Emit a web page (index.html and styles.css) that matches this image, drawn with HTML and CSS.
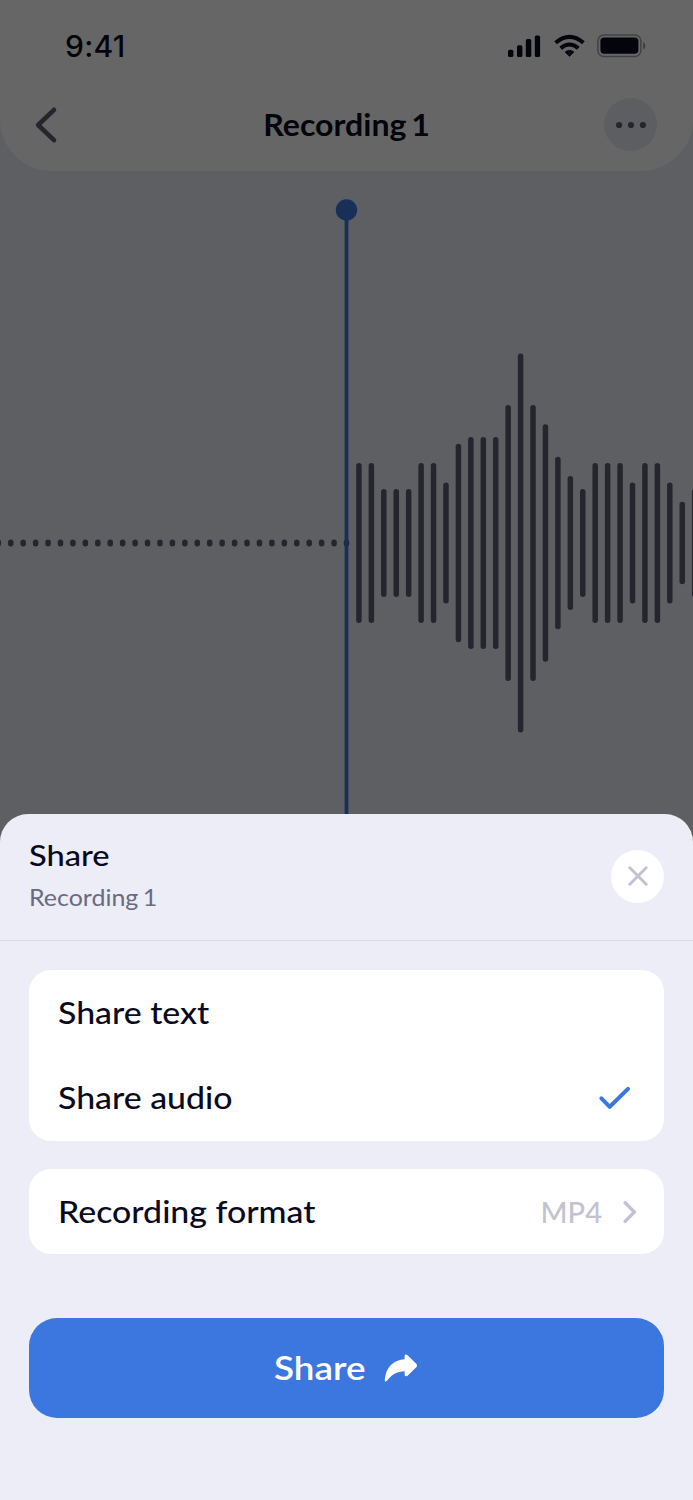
FILE: index.html
```html
<!DOCTYPE html>
<html lang="en">
<head>
<meta charset="utf-8">
<title>Recording 1</title>
<link rel="stylesheet" href="styles.css">
</head>
<body>
<div class="phone">
  <main class="player">
    <header class="topbar">
      <div class="status">
        <span class="time">9:41</span>
        <svg class="status-icons" width="140" height="26" viewBox="0 0 140 26">
          <g fill="#0a0a1e">
            <rect x="1" y="16.8" width="5.4" height="7.2" rx="1.6"/>
            <rect x="10" y="12.3" width="5.4" height="11.7" rx="1.6"/>
            <rect x="18.8" y="6.1" width="5.5" height="17.9" rx="1.6"/>
            <rect x="27.8" y="2.6" width="5.3" height="21.4" rx="1.6"/>
            <path d="M62.5 23.2 58.2 19Q62.5 15.8 66.8 19Z" stroke="#0a0a1e" stroke-width="1" stroke-linejoin="round"/>
          </g>
          <g fill="none" stroke="#0a0a1e" stroke-width="4">
            <path d="M48.6 9.8Q62.5-2 76.4 9.8"/>
            <path d="M53.7 15.2Q62.5 7.9 71.3 15.2"/>
          </g>
          <rect x="90.9" y="2" width="43" height="21.5" rx="6" fill="none" stroke="#0a0a1e" stroke-opacity=".38" stroke-width="1.5"/>
          <rect x="93.4" y="4.5" width="38" height="16.3" rx="3.7" fill="#0a0a1e"/>
          <path d="M136.2 9v7.6q2.2-1 2.2-3.8t-2.2-3.8Z" fill="#0a0a1e" fill-opacity=".42"/>
        </svg>
      </div>
      <div class="nav">
        <svg class="back" width="28" height="40" viewBox="0 0 28 40"><path d="M20 4.8 4.1 20 20 35.2" fill="none" stroke="#5c5c70" stroke-width="4.6" stroke-linecap="round" stroke-linejoin="round"/></svg>
        <h1 class="title">Recording 1</h1>
        <button class="more" aria-label="More"><svg width="32" height="8" viewBox="0 0 32 8" fill="#5c5c70"><circle cx="4.1" cy="4" r="3.1"/><circle cx="16" cy="4" r="3.1"/><circle cx="27.9" cy="4" r="3.1"/></svg></button>
      </div>
    </header>
    <svg class="waveform" id="waveform" width="693" height="643" viewBox="0 171 693 643"></svg>
  </main>
  <div class="scrim"></div>
  <section class="sheet">
    <header class="sheet-head">
      <div class="sheet-titles">
        <h2 class="sheet-title">Share</h2>
        <p class="sheet-sub">Recording 1</p>
      </div>
      <button class="close" aria-label="Close"><svg width="20" height="20" viewBox="0 0 20 20"><path d="M1.8 1.8l16.4 16.4M18.2 1.8 1.8 18.2" stroke="#c2c2d0" stroke-width="2.9" stroke-linecap="round"/></svg></button>
    </header>
    <div class="sheet-body">
      <div class="card">
        <div class="row"><span class="label">Share text</span></div>
        <div class="row"><span class="label">Share audio</span>
          <svg class="check" width="34" height="26" viewBox="0 0 34 26"><path d="M3.4 13.3 11.7 21.8 30 3.9" fill="none" stroke="#3b77df" stroke-width="4" stroke-linecap="round" stroke-linejoin="round"/></svg></div>
      </div>
      <div class="card">
        <div class="row"><span class="label">Recording format</span>
          <span class="value">MP4</span>
          <svg class="chevron" width="16" height="24" viewBox="0 0 16 24"><path d="M4.1 2.7 13.4 12 4.1 21.4" fill="none" stroke="#c2c2d0" stroke-width="3.4" stroke-linecap="round" stroke-linejoin="round"/></svg></div>
      </div>
      <button class="share"><span class="share-label">Share</span>
        <svg width="34" height="28" viewBox="0 0 34 28"><path d="M3 26.7C1.6 28.1.6 27.4.8 25.4 1.7 13.5 9.5 5.8 20.6 5.2V2.2C20.6.5 22.2 0 23.3 1L32.3 9.8C33.3 10.8 33.3 12.2 32.3 13.2L23.3 21.9C22.2 22.8 20.6 22.2 20.6 20.6V17.2C13.5 17.4 8 20 3 26.7Z" fill="#fff"/></svg>
      </button>
    </div>
  </section>
</div>
<script src="waveform.js"></script>
</body>
</html>
```
FILE: styles.css
```css
* { box-sizing: border-box; margin: 0; }
body { background: #ecedf6; font-family: Lato, sans-serif; color: #0a0a1e; }
button { border: 0; padding: 0; font: inherit; }
svg { display: block; flex: none; }
.phone { position: relative; width: 693px; height: 1500px; overflow: hidden; display: flex; flex-direction: column; }
.player { height: 844px; margin-bottom: -30px; flex: none; background: #ecedf5; display: flex; flex-direction: column; }
.topbar { height: 171px; background: #fff; border-radius: 0 0 52px 52px; display: flex; flex-direction: column; }
.status { height: 92px; padding: 0 46px 0 65px; display: flex; align-items: center; justify-content: space-between; }
.time { font: 500 30px/36px Inter, sans-serif; letter-spacing: .3px; }
.status-icons { margin-top: -1px; }
.nav { height: 65px; padding: 0 36px 0 34px; display: grid; grid-template-columns: 80px 1fr 78px; align-items: center; }
.title { font-size: 31px; font-weight: 700; line-height: 36px; text-align: center; white-space: nowrap; word-spacing: -3px; transform: scaleX(1.035); padding-bottom: 2px; }
.more { width: 53px; height: 53px; border-radius: 50%; background: #e9ecf6; display: grid; place-items: center; justify-self: end; }
.waveform .bar { stroke: #5c5c70; stroke-width: 5.5; stroke-linecap: round; }
.waveform .playhead { stroke: #3b77df; stroke-width: 3.8; }
.waveform .knob { fill: #3b77df; }
.scrim { position: absolute; inset: 0; background: rgba(0, 0, 0, .6); }
.sheet { position: relative; height: 686px; background: #ecedf6; border-radius: 28px 28px 0 0; }
.sheet-head { height: 127px; padding: 0 29px 2px; display: flex; align-items: center; justify-content: space-between; border-bottom: 1.5px solid #dcdce6; }
.sheet-titles { display: flex; flex-direction: column; gap: 6px; }
.sheet-title { font-size: 29px; font-weight: 500; line-height: 36px; transform: scaleX(1.125); transform-origin: left; }
.sheet-sub { font-size: 24px; line-height: 36px; color: #6a6a80; word-spacing: -2px; transform: scaleX(1.04); transform-origin: left; }
.close { width: 53px; height: 53px; border-radius: 50%; background: #fff; display: grid; place-items: center; }
.sheet-body { padding: 29px 29px 0; display: flex; flex-direction: column; }
.card { background: #fff; border-radius: 22px; margin-bottom: 28.5px; }
.row { height: 85.25px; padding: 0 27px 0 29px; display: flex; align-items: center; }
.label { font-size: 31px; font-weight: 500; line-height: 38px; padding-bottom: 1px; margin-right: auto; transform: scaleX(1.092); transform-origin: left; }
.check { margin-right: 5px; }
.value { font-size: 29px; font-weight: 500; color: #c2c2d0; margin-right: 19px; }
.share { height: 100px; margin-top: 35px; border-radius: 28px; background: #3b77df; color: #fff; display: flex; align-items: center; justify-content: center; gap: 25px; padding-left: 5px; }
.share-label { font-size: 32px; font-weight: 600; line-height: 40px; transform: scaleX(1.15); }
```
FILE: waveform.js
```javascript
const svg = document.getElementById("waveform");
const add = (tag, attrs) => {
  const el = document.createElementNS("http://www.w3.org/2000/svg", tag);
  for (const key in attrs) el.setAttribute(key, attrs[key]);
  svg.appendChild(el);
};
const center = 543, pitch = 12.435, head = 346.5;
const levels = [80, 80, 54, 54, 54, 80, 80, 60.5, 99.3, 106, 106, 106, 138, 189.5, 138, 118.7, 86.3, 67, 54, 80, 80, 80, 60.5, 80, 80, 60.5, 41.3, 54];
const bar = (x, half) => add("line", { class: "bar", x1: x, x2: x, y1: center - half + 2.7, y2: center + half - 2.7 });
for (let i = 0; i < 29; i++) bar(head - i * pitch, 3.5);
levels.forEach((half, i) => bar(head + (i + 1) * pitch, half));
add("line", { class: "playhead", x1: head, x2: head, y1: 210, y2: 814 });
add("circle", { class: "knob", cx: head, cy: 210, r: 10.7 });
```
